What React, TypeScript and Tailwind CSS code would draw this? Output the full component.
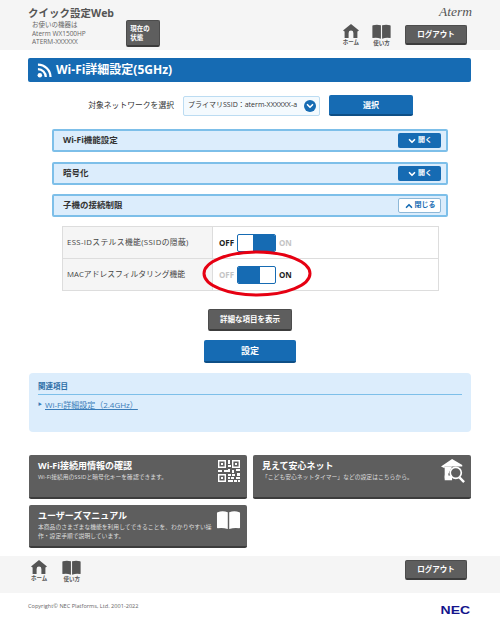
import { ChevronDown, ChevronUp } from 'lucide-react'

function HomeIcon({ className }: { className?: string }) {
  return (
    <svg viewBox="0 0 16 14" className={className} fill="currentColor">
      <path d="M8 0 L16 6.6 L14.4 7.6 L14.4 14 L10.4 14 L10.4 9 A2.4 2.4 0 0 0 5.6 9 L5.6 14 L1.6 14 L1.6 7.6 L0 6.6 Z" />
    </svg>
  )
}

function BookIcon({ className }: { className?: string }) {
  return (
    <svg viewBox="0 0 20 15" className={className} fill="currentColor">
      <path d="M1 1 Q5 -0.4 9.4 1 L9.4 15 Q5 13.6 1 14.4 Q0.4 14.4 0.4 13.8 L0.4 1.6 Q0.4 1.2 1 1 Z" />
      <path d="M19 1 Q15 -0.4 10.6 1 L10.6 15 Q15 13.6 19 14.4 Q19.6 14.4 19.6 13.8 L19.6 1.6 Q19.6 1.2 19 1 Z" />
    </svg>
  )
}

function WifiIcon() {
  return (
    <svg viewBox="0 0 16 16" className="w-[15px] h-[15px] text-white" fill="none" stroke="currentColor">
      <circle cx="3" cy="13" r="2.4" fill="currentColor" stroke="none" />
      <path d="M1 6.6 A8.4 8.4 0 0 1 9.4 15" strokeWidth="2.4" />
      <path d="M1 1.6 A13.4 13.4 0 0 1 14.4 15" strokeWidth="2.4" />
    </svg>
  )
}

function QrIcon() {
  return (
    <svg viewBox="0 0 22 22" className="w-[22px] h-[22px] text-white" fill="currentColor">
      <path fillRule="evenodd" d="M0 0h8v8H0zM1.4 1.4v5.2h5.2V1.4zM14 0h8v8h-8zM15.4 1.4v5.2h5.2V1.4zM0 14h8v8H0zM1.4 15.4v5.2h5.2v-5.2z" />
      <path d="M3 3h2v2H3zM17 3h2v2h-2zM3 17h2v2H3zM10 0h2v4h-2zM10 5h3v2h-3zM0 10h4v2H0zM6 10h4v2H6zM10 9h2v3h-2zM14 10h2v3h-2zM18 9h4v2h-4zM10 14h3v2h-3zM14 14h3v2h-3zM19 13h3v3h-3zM10 17h2v2h-2zM13 17h3v2h-3zM18 17h4v2h-4zM10 20h5v2h-5zM16 20h3v2h-3zM20 20h2v2h-2z" />
    </svg>
  )
}

function HouseSearchIcon() {
  return (
    <svg viewBox="0 0 26 26" className="w-[24px] h-[24px] text-white" fill="currentColor">
      <path d="M12 0 L23 6.5 L23 8 L4 8 L4 18 L12 18 L12 23 L4 23 L4 10 L0 8 Z" />
      <path d="M4 8 L12 8 L8 16 L8 21 L4 21 Z" />
      <circle cx="16" cy="15" r="6" fill="none" stroke="currentColor" strokeWidth="1.8" />
      <path d="M20 20 L25 25" stroke="currentColor" strokeWidth="2.6" />
    </svg>
  )
}

function GrayButton({ children, className }: { children: React.ReactNode; className: string }) {
  return (
    <div className={`flex items-center justify-center rounded-[2px] bg-[#5e5e5e] border border-[#4c4c4c] border-b-2 border-b-[#3c3c3c] text-white font-bold ${className}`}>
      {children}
    </div>
  )
}

function Accordion({ title, open, className }: { title: string; open?: boolean; className?: string }) {
  return (
    <div className={`h-[23px] flex items-center justify-between pl-[9px] pr-[5px] rounded-[2px] bg-[#dcedfc] border-2 border-[#7dbfe9] ${className ?? ''}`}>
      <span className="text-[8.5px] font-bold text-[#333]">{title}</span>
      {open ? (
        <div className="w-[43px] h-[15px] flex items-center justify-center gap-[1px] rounded-[2px] bg-white border border-[#8db8d8] text-[#166bb3] text-[7px] font-bold">
          <ChevronUp className="w-[10px] h-[10px]" strokeWidth={4} />
          閉じる
        </div>
      ) : (
        <div className="w-[43px] h-[15px] flex items-center justify-center gap-[1px] rounded-[2px] bg-[#166bb3] text-white text-[7px] font-bold">
          <ChevronDown className="w-[10px] h-[10px]" strokeWidth={4} />
          開く
        </div>
      )}
    </div>
  )
}

function Toggle({ on }: { on?: boolean }) {
  return (
    <div className="flex items-center">
      <span className={`w-[18px] text-[8px] font-bold ${on ? 'text-[#c4c4c4]' : 'text-[#222]'}`}>OFF</span>
      <div className="w-[39px] h-[18px] flex rounded-[2px] border border-[#166bb3] overflow-hidden bg-white">
        {on ? (
          <>
            <div className="w-[22px] bg-[#166bb3]" />
            <div className="flex-1" />
          </>
        ) : (
          <>
            <div className="flex-1" />
            <div className="w-[22px] bg-[#166bb3]" />
          </>
        )}
      </div>
      <span className={`ml-[3px] text-[8px] font-bold ${on ? 'text-[#222]' : 'text-[#c4c4c4]'}`}>ON</span>
    </div>
  )
}

function Card({ title, desc, icon, className }: { title: string; desc: React.ReactNode; icon: React.ReactNode; className: string }) {
  return (
    <div className={`relative rounded-[2px] bg-[#5e5e5e] border-b-2 border-[#3c3c3c] pl-[9px] pr-[32px] pt-[4px] text-white ${className}`}>
      <div className="text-[9px] leading-[13px] font-bold">{title}</div>
      <div className="text-[5.8px] leading-[9px] text-[#dddddd] mt-[1px]">{desc}</div>
      <div className="absolute right-[6px] top-[4px]">{icon}</div>
    </div>
  )
}

export default function App() {
  return (
    <div className="relative w-[500px] h-[639px] bg-white overflow-hidden text-[#333] [font-family:'Open_Sans','Noto_Sans_CJK_JP',sans-serif]">
      <header className="h-[50px] bg-[#f5f5f5] flex pl-[28px] pr-[28px]">
        <div className="pt-[6px]">
          <div className="text-[10.5px] leading-[14px] font-bold text-[#555]">クイック設定Web</div>
          <div className="flex items-start">
            <div className="w-[62px] pl-[4px] pt-[1px] text-[6.5px] leading-[8.5px] text-[#666] whitespace-nowrap">
              <div>お使いの機器は</div>
              <div>Aterm WX1500HP</div>
              <div>ATERM-XXXXXX</div>
            </div>
            <GrayButton className="ml-[36px] w-[34px] h-[27px] text-[6.5px] leading-[9px]">
              <span className="-ml-[6px]">現在の<br />状態</span>
            </GrayButton>
          </div>
        </div>
        <div className="ml-auto flex flex-col items-end">
          <div className="h-[20px] mt-[2px] text-[13.5px] leading-[20px] italic text-[#555] [font-family:'Liberation_Serif',serif]">Aterm</div>
          <div className="flex items-start mt-[2px] mr-[5px]">
            <div className="flex flex-col items-center text-[#555] mr-[13px]">
              <HomeIcon className="w-[16px] h-[14px]" />
              <span className="text-[5.5px] leading-[8px] font-bold">ホーム</span>
            </div>
            <div className="flex flex-col items-center text-[#555] mr-[14px]">
              <BookIcon className="w-[19px] h-[15px]" />
              <span className="text-[5.5px] leading-[8px] font-bold">使い方</span>
            </div>
            <GrayButton className="w-[62px] h-[20px] text-[7.5px] mt-[1px]">ログアウト</GrayButton>
          </div>
        </div>
      </header>

      <main className="px-[29px]">
        <div className="mt-[8px] -ml-[1px] h-[24px] rounded-[2px] bg-[#166bb3] flex items-center gap-[4px] pl-[9px] text-white text-[12px] font-bold">
          <WifiIcon />
          Wi-Fi詳細設定(5GHz)
        </div>

        <div className="mt-[13px] flex items-center h-[21px]">
          <span className="ml-[52px] w-[93px] text-right text-[7.8px] text-[#333] whitespace-nowrap">対象ネットワークを選択</span>
          <div className="ml-[9px] w-[137px] h-[20px] flex items-center justify-between pl-[4px] pr-[3px] rounded-[2px] border border-[#bcdcf2] bg-[#f4fafe] text-[7px] text-[#333] whitespace-nowrap">
            プライマリSSID：aterm-XXXXXX-a
            <span className="w-[12px] h-[12px] shrink-0 rounded-full bg-[#166bb3] flex items-center justify-center">
              <ChevronDown className="w-[10px] h-[10px] text-white" strokeWidth={4} />
            </span>
          </div>
          <div className="ml-[9px] w-[84px] h-[21px] flex items-center justify-center rounded-[2px] bg-[#166bb3] border-b-2 border-[#0e4f86] text-white text-[8px] font-bold">選択</div>
        </div>

        <div className="mt-[13px] mx-[23px] flex flex-col gap-[10px]">
          <Accordion title="Wi-Fi機能設定" />
          <Accordion title="暗号化" />
          <Accordion title="子機の接続制限" open className="-mt-[1px]" />
        </div>

        <div className="mt-[9px] ml-[33px] w-[377px] border border-[#dddddd] text-[7.8px] text-[#444] whitespace-nowrap">
          <div className="flex h-[32px] border-b border-[#dddddd]">
            <div className="w-[150px] bg-[#f5f5f5] border-r border-[#dddddd] flex items-center pl-[4px] tracking-[0.35px]">ESS-IDステルス機能(SSIDの隠蔽)</div>
            <div className="flex items-center pl-[6px]"><Toggle /></div>
          </div>
          <div className="flex h-[31px]">
            <div className="w-[150px] bg-[#f5f5f5] border-r border-[#dddddd] flex items-center pl-[4px]">MACアドレスフィルタリング機能</div>
            <div className="flex items-center pl-[6px]"><Toggle on /></div>
          </div>
        </div>

        <div className="mt-[18px] flex flex-col items-center gap-[9px]">
          <GrayButton className="w-[84px] h-[22px] text-[7.5px]">詳細な項目を表示</GrayButton>
          <div className="w-[92px] h-[23px] flex items-center justify-center rounded-[2px] bg-[#166bb3] border-b-2 border-[#0e4f86] text-white text-[9px] font-bold">設定</div>
        </div>

        <div className="mt-[10px] h-[59px] rounded-[4px] bg-[#dcedfc] px-[9px] pt-[8px]">
          <div className="h-[14px] text-[7.5px] leading-[10px] font-bold text-[#2c6ea6] border-b border-[#7dbfe9]">関連項目</div>
          <div className="mt-[4px] flex items-center text-[8px] text-[#3a7cb8]">
            <span className="text-[4px] mr-[3px]">▶</span>
            <span className="underline">Wi-Fi詳細設定（2.4GHz）</span>
          </div>
        </div>

        <div className="mt-[23px] grid grid-cols-[218px_218px] gap-x-[6px] gap-y-[6px]">
          <Card className="h-[44px]" title="Wi-Fi接続用情報の確認" desc="Wi-Fi接続用のSSIDと暗号化キーを確認できます。" icon={<span className="block mr-[1px] mt-[1px]"><QrIcon /></span>} />
          <Card className="h-[44px]" title="見えて安心ネット" desc="「こども安心ネットタイマー」などの設定はこちらから。" icon={<HouseSearchIcon />} />
          <Card className="h-[43px]" title="ユーザーズマニュアル" desc="本商品のさまざまな機能を利用してできることを、わかりやすい操作・設定手順で説明しています。" icon={<BookIcon className="w-[25px] h-[18px] text-white mt-[2px]" />} />
        </div>
      </main>

      <div className="mt-[8px] h-[37px] bg-[#f5f5f5] flex items-start pl-[31px] pr-[33px] pt-[4px]">
        <div className="flex flex-col items-center text-[#555] mr-[15px]">
          <HomeIcon className="w-[16px] h-[14px]" />
          <span className="text-[5.5px] leading-[8px] font-bold">ホーム</span>
        </div>
        <div className="flex flex-col items-center text-[#555]">
          <BookIcon className="w-[19px] h-[15px]" />
          <span className="text-[5.5px] leading-[8px] font-bold">使い方</span>
        </div>
        <GrayButton className="ml-auto w-[62px] h-[20px] text-[7.5px]">ログアウト</GrayButton>
      </div>

      <footer className="flex items-start justify-between pl-[28px] pr-[30px] pt-[9px]">
        <span className="text-[5.6px] leading-[8px] text-[#666]">Copyright© NEC Platforms, Ltd. 2001-2022</span>
        <span className="mt-[3px] text-[10px] leading-[12px] font-bold text-[#14148c] scale-x-[1.4] origin-right [font-family:'Liberation_Sans',sans-serif]">NEC</span>
      </footer>

      <svg viewBox="0 0 110 47" className="absolute left-[202px] top-[250px] w-[110px] h-[47px] pointer-events-none" fill="none">
        <ellipse cx="55" cy="23.5" rx="53" ry="21.5" stroke="#e60012" strokeWidth="3" />
      </svg>
    </div>
  )
}
